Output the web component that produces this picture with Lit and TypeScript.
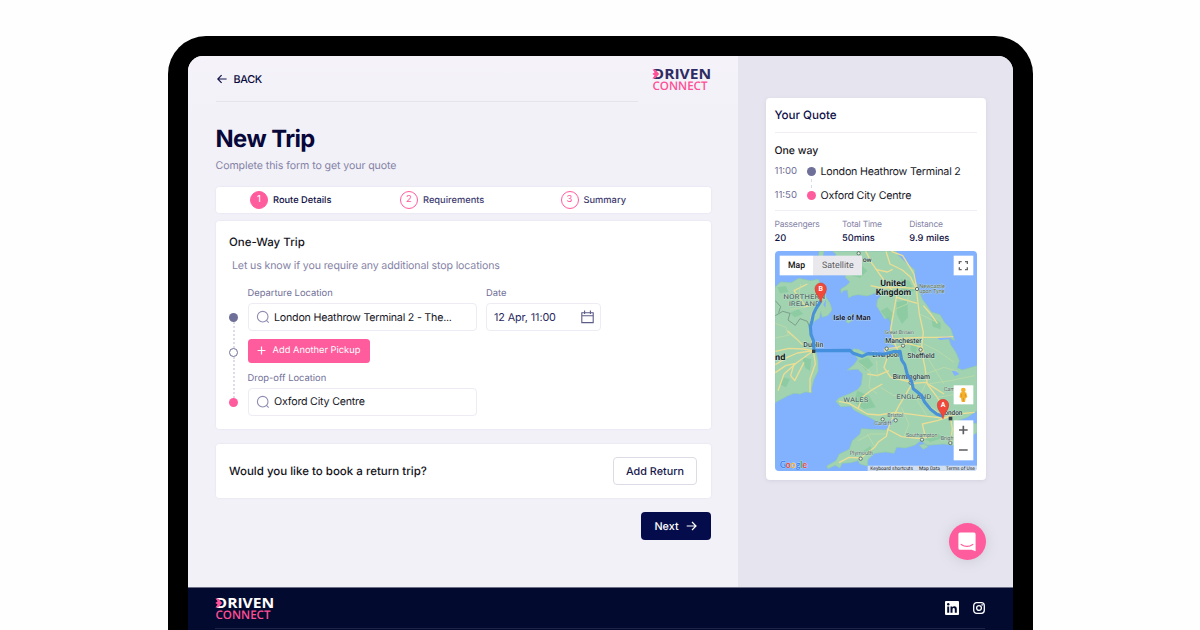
import { LitElement, css, html, svg } from 'lit';
import { customElement, property } from 'lit/decorators.js';

@customElement('brand-logo')
export class BrandLogo extends LitElement {
    @property() tone = 'dark';

    render() {
        return html`
            <svg class="logo ${this.tone}" width="60" height="24" viewBox="0 0 60 24">
                <text class="driven" x="0.6" y="11.6" textLength="58.6" lengthAdjust="spacingAndGlyphs">DRIVEN</text>
                <path class="notch" d="M-1 3.3H3.6L8 6.9L3.6 10.3H-1Z"/>
                <path class="arrow" d="M.4 2.5H3.2L7.2 6.9L3.2 11.5H.4L2.6 8.5L.4 6.9L2.6 5.3Z"/>
                <text class="connect" x="0.5" y="22.6" textLength="55" lengthAdjust="spacingAndGlyphs">CONNECT</text>
            </svg>
        `;
    }

    static styles = css`
        :host {
            display: block;
        }
        .logo {
            display: block;
            overflow: visible;
            font-family: "Open Sans", sans-serif;
        }
        .driven {
            font-size: 14px;
            font-weight: 700;
            fill: #2f2c64;
        }
        .light .driven {
            fill: #fff;
        }
        .notch {
            fill: #f5f3f9;
        }
        .light .notch {
            fill: #030a2f;
        }
        .arrow {
            fill: #ff4f96;
        }
        .connect {
            font-size: 11.8px;
            font-weight: 600;
            fill: #ff4f96;
        }
    `;
}

@customElement('route-map')
export class RouteMap extends LitElement {
    // [text, x, y, width, size, kind]
    labels: [string, number, number, number, number, string][] = [
        ['ow', 276, 43, 27, 20, 'town'],
        ['United', 329, 116, 77, 26, 'big'],
        ['Kingdom', 315, 142, 106, 26, 'big'],
        ['Newcastle', 446, 121, 77, 17, 'small'],
        ['upon Tyne', 446, 137, 76, 17, 'small'],
        ['NORTHERN', 38, 155, 126, 20, 'area'],
        ['IRELAND', 54, 176, 94, 20, 'area'],
        ['Isle of Man', 188, 218, 112, 22, 'strong'],
        ['Great Britain', 342, 260, 88, 16, 'small'],
        ['Manchester', 344, 287, 109, 21, 'town'],
        ['Dublin', 98, 300, 60, 21, 'town'],
        ['Liverpool', 305, 329, 80, 21, 'town'],
        ['Sheffield', 410, 332, 82, 21, 'town'],
        ['nd', 13, 339, 31, 26, 'big'],
        ['Birmingham', 366, 396, 112, 21, 'town'],
        ['ENGLAND', 377, 455, 105, 20, 'area'],
        ['WALES', 218, 465, 75, 20, 'area'],
        ['Cam', 519, 430, 34, 17, 'small'],
        ['Bristol', 350, 509, 48, 17, 'small'],
        ['Cardiff', 311, 534, 51, 17, 'small'],
        ['London', 511, 502, 64, 21, 'town'],
        ['Southampton', 406, 569, 94, 17, 'small'],
        ['Brighton', 510, 577, 62, 17, 'small'],
        ['Plymouth', 237, 624, 69, 18, 'small'],
    ];

    towns = [[264, 18], [439, 125], [348, 304], [397, 295], [450, 307], [420, 406], [336, 516], [375, 519], [454, 577], [539, 587], [270, 634]];

    roads = [
        'M285 12L304 48L330 85L350 112L378 145L368 200L360 245L370 285L392 330L405 375L425 408L400 450L385 475L362 520L352 545L347 567L322 585L312 600L270 632L235 630L205 646',
        'M346 12L358 50L395 68L420 90L437 125L446 200L458 255L452 307L463 360L470 410L500 450L535 505',
        'M362 12L396 25L430 80L438 122',
        'M315 66L350 74L366 66M300 115L332 122L380 120L436 123M378 150L440 168',
        'M370 275L410 272L458 270L500 270L548 268M348 304L380 300L410 288L455 300L460 330',
        'M458 175L480 200L500 228M340 304L352 325L340 360L360 390L420 404M425 408L465 405L520 440',
        'M425 410L440 435L480 480L520 510M205 462L235 468L262 484L290 500L325 503L375 495L430 502L470 507L520 512L560 500L612 495',
        'M535 508L500 520L455 530L462 560L455 575M540 512L545 545L540 585M350 545L392 568L450 574L500 565',
        'M290 380L320 385L355 370M262 484L275 450L300 430L335 410',
        'M14 312L55 303L98 305L128 310L80 345L40 380L22 430M128 310L134 350L118 395L118 435M128 310L80 317L50 330L14 352',
        'M128 308L118 250L123 200L150 165L105 178L70 130L110 110M14 376L45 355L75 348M70 350L60 385L72 400L100 345',
        'M96 292L72 270L50 250',
    ];

    pin(x: number, y: number, letter: string) {
        return svg`
            <path class="pin" d="M${x} ${y}C${x - 3} ${y - 19} ${x - 17} ${y - 24} ${x - 17} ${y - 41}A17 17 0 0 1 ${x + 17} ${y - 41}C${x + 17} ${y - 24} ${x + 3} ${y - 19} ${x} ${y}Z"/>
            <text class="pin-text" x=${x} y=${y - 34}>${letter}</text>
        `;
    }

    render() {
        return html`
            <svg class="map" width="202" height="220" viewBox="13 11 606 660">
                <rect class="sea" x="13" y="11" width="606" height="660"/>

                <path class="land" d="M13 120L30 104L62 106L84 93L120 100L142 96L158 120L166 150L178 168L184 188L172 204L155 210L150 192L146 212L128 224L118 240L124 262L132 284L135 310L142 340L142 372L130 396L122 425L124 436L104 434L88 440L70 438L50 446L32 456L13 466Z"/>
                <path class="land" d="M145 12L160 12L156 28L144 34ZM186 12L196 20L192 42L178 50L176 70L190 82L198 50L216 30L230 60L224 90L238 104L226 116L210 125L212 138L218 130L230 128L234 152L246 145L262 142L290 146L316 136L332 144L320 158L318 176L330 195L342 215L355 208L362 225L358 246L370 268L362 290L346 300L352 314L326 322L306 315L288 320L262 305L244 310L262 335L250 352L230 368L262 366L276 380L272 412L262 426L240 438L205 452L196 462L210 478L240 476L250 488L272 500L292 508L318 522L342 524L372 512L362 532L345 548L300 546L272 544L268 560L245 580L236 606L206 620L196 640L168 656L172 664L194 654L208 662L214 648L240 646L262 640L268 650L290 656L292 636L312 618L345 614L370 618L378 600L404 602L432 594L450 580L470 594L520 590L548 594L576 586L600 566L619 556L619 528L588 528L560 520L590 510L619 490L619 355L575 368L560 362L566 340L556 316L540 292L532 268L552 280L540 244L522 226L508 202L482 194L466 170L456 158L444 128L430 88L432 68L404 44L382 24L376 12Z"/>
                <path class="land" d="M238 206L250 198L244 220L232 228L226 222ZM240 312L252 304L264 312L252 322ZM446 594L462 590L472 598L458 606Z"/>
                <path class="water" d="M346 302L362 292L384 298L360 306ZM500 272L526 266L550 268L530 276L508 278ZM552 368L566 380L552 386L544 372ZM166 156L164 182L158 172Z"/>
                <path class="park" d="M238 60L262 45L290 70L268 92L240 84ZM330 190L350 180L366 198L360 224L344 210ZM390 95L415 100L432 130L404 140L390 122ZM378 164L410 158L412 210L394 230L378 200ZM262 340L292 330L308 352L286 370ZM260 430L295 445L315 480L280 486L250 464ZM420 280L440 290L436 320L420 310ZM482 210L510 226L510 246L486 238ZM278 610L300 596L306 612L286 626ZM20 120L45 116L54 134L28 138ZM58 196L84 186L98 200L72 210ZM94 330L122 335L118 370L104 362ZM460 575L500 560L520 570L480 584ZM34 388L58 396L46 420L30 412Z"/>

                <path class="border" d="M14 205L36 192L58 198L52 218L74 234L88 214L110 222L116 238M14 160L30 178L24 196"/>
                ${this.roads.map((d) => svg`<path class="road" d=${d}/>`)}
                <path class="street" d="M14 272L60 262L96 292M14 228L46 240L52 262M90 110L84 150L104 180L58 186M270 350L300 375L295 420L320 440M318 340L320 390M262 580L300 560L345 560M290 560L312 598M416 120L410 170L375 185M446 200L500 225M460 290L500 310L550 345M465 380L520 360L560 372M470 410L540 400L612 385M500 450L560 440M392 480L415 530L400 568M470 507L440 460L465 410M330 420L370 445L395 440M470 330L520 410"/>

                ${this.towns.map(([x, y]) => svg`<circle class="town-dot" cx=${x} cy=${y} r="5"/>`)}
                ${this.labels.map(([text, x, y, width, size, kind]) => svg`
                    <text class="label ${kind}" x=${x} y=${y} font-size=${size} textLength=${width} lengthAdjust="spacingAndGlyphs">${text}</text>
                `)}
                <rect class="capital" x="534" y="508" width="11" height="11"/>

                <path class="route" d="M150 162L136 184L128 200L124 220L119 238L121 262L128 280L130 310L170 310L238 309L248 318L274 327L292 319L340 320L368 313L388 312L393 338L402 352L410 382L422 400L428 424L452 444L462 464L480 486L498 500L514 506"/>
                <rect class="capital" x="124" y="307" width="10" height="10"/>
                ${this.pin(150, 165, 'B')}
                ${this.pin(517, 514, 'A')}

                <rect class="ctl" x="27" y="25" width="100" height="59"/>
                <rect class="ctl muted" x="127" y="25" width="147" height="59"/>
                <text class="ctl-text on" x="52" y="63" textLength="51" lengthAdjust="spacingAndGlyphs">Map</text>
                <text class="ctl-text" x="154" y="63" textLength="95" lengthAdjust="spacingAndGlyphs">Satellite</text>

                <rect class="ctl" x="549" y="25" width="59" height="59"/>
                <path class="full" d="M566 50V43H573M583 43H590V50M590 60V67H583M573 67H566V60"/>

                <rect class="ctl" x="549" y="414" width="59" height="57"/>
                <path class="man" d="M569 436Q578 431 587 436L590 450L585 452L583 464H573L571 452L566 450Z"/>
                <circle class="man" cx="578" cy="428" r="7"/>
                <path class="man-line" d="M572 440V449M584 440V449M578 452V462"/>

                <rect class="ctl" x="549" y="519" width="59" height="120"/>
                <path class="zoom" d="M565 548H591M578 535V561M565 608H591"/>

                <text class="google" x="27" y="662" textLength="82" lengthAdjust="spacingAndGlyphs"><tspan fill="#4285f4">G</tspan><tspan fill="#e8504a">o</tspan><tspan fill="#f3b92e">o</tspan><tspan fill="#4285f4">g</tspan><tspan fill="#45a65c">l</tspan><tspan fill="#e8504a">e</tspan></text>
                <rect class="legal-bg" x="291" y="655" width="328" height="16"/>
                <text class="legal" x="299" y="668" textLength="128" lengthAdjust="spacingAndGlyphs">Keyboard shortcuts</text>
                <text class="legal" x="445" y="668" textLength="63" lengthAdjust="spacingAndGlyphs">Map Data</text>
                <text class="legal" x="525" y="668" textLength="88" lengthAdjust="spacingAndGlyphs">Terms of Use</text>
            </svg>
        `;
    }

    static styles = css`
        :host {
            display: block;
        }
        .map {
            display: block;
            border-radius: 4px;
            font-family: Roboto, sans-serif;
            text-rendering: geometricPrecision;
        }
        .sea, .water {
            fill: #82b1fd;
        }
        .land {
            fill: #a1d3b1;
            stroke: #92cba9;
            stroke-width: 2;
        }
        .park {
            fill: #82c79b;
            opacity: .65;
        }
        .border {
            fill: none;
            stroke: #75947f;
            stroke-width: 2.5;
        }
        .road {
            fill: none;
            stroke: #ecdd94;
            stroke-width: 4;
            stroke-linejoin: round;
        }
        .street {
            fill: none;
            stroke: #c2dba6;
            stroke-width: 2.2;
        }
        .route {
            fill: none;
            stroke: #3f8ddb;
            stroke-width: 9.5;
            stroke-linejoin: round;
            stroke-linecap: round;
            opacity: .92;
        }
        .town-dot {
            fill: #dfeee2;
            stroke: #52605a;
            stroke-width: 2.5;
        }
        .capital {
            fill: #34434a;
        }
        .label {
            fill: #2b3b3f;
            stroke: #d5eadb;
            stroke-width: 2.5;
            paint-order: stroke;
            font-weight: 500;
        }
        .big {
            fill: #12191c;
            font-weight: 700;
        }
        .strong {
            fill: #15233f;
            stroke: #b6d1ef;
            font-weight: 700;
        }
        .area {
            fill: #56736a;
            stroke-width: 2;
        }
        .small {
            fill: #51635f;
            stroke-width: 1.5;
            font-weight: 400;
        }
        .pin {
            fill: #f0493b;
            stroke: #d23f33;
            stroke-width: 2;
        }
        .pin-text {
            fill: #fff;
            font-size: 21px;
            font-weight: 700;
            text-anchor: middle;
        }
        .ctl {
            fill: #fff;
        }
        .muted {
            fill: #e9e9ed;
        }
        .ctl-text {
            font-size: 27px;
            fill: #5b5b60;
        }
        .on {
            font-weight: 500;
            fill: #111;
        }
        .full {
            fill: none;
            stroke: #666;
            stroke-width: 4;
        }
        .man {
            fill: #f5b12c;
        }
        .man-line {
            fill: none;
            stroke: #d08a1e;
            stroke-width: 2;
        }
        .zoom {
            fill: none;
            stroke: #5e5e62;
            stroke-width: 5;
        }
        .google {
            font-family: Lato, sans-serif;
            font-size: 30px;
            font-weight: 700;
            stroke: #d6e4fb;
            stroke-width: 1.5;
            paint-order: stroke;
        }
        .legal-bg {
            fill: #dfe7ee;
            opacity: .85;
        }
        .legal {
            font-size: 15px;
            fill: #1e2226;
        }
    `;
}

@customElement('app-root')
export class AppRoot extends LitElement {
    steps = ['Route Details', 'Requirements', 'Summary'];

    stats = [
        ['Passengers', '20'],
        ['Total Time', '50mins'],
        ['Distance', '9.9 miles'],
    ];

    searchIcon() {
        return html`
            <svg class="search-icon" width="14" height="14" viewBox="0 0 14 14">
                <circle cx="6.7" cy="6.7" r="5.3"/>
                <path d="M10.4 10.4L12.7 12.7"/>
            </svg>
        `;
    }

    render() {
        return html`
            <div class="device">
                <div class="screen">
                    <div class="content">
                        <div class="main">
                            <div class="header">
                                <a class="back">
                                    <svg width="10" height="10" viewBox="0 0 10 10"><path class="back-arrow" d="M9.6 5H.9M4.6 1.1L.8 5L4.6 8.9"/></svg>
                                    BACK
                                </a>
                                <brand-logo></brand-logo>
                            </div>
                            <div class="header-line"></div>

                            <h1 class="title">New Trip</h1>
                            <p class="subtitle">Complete this form to get your quote</p>

                            <div class="panel steps">
                                ${this.steps.map((step, i) => html`
                                    <div class="step ${i === 0 ? 'active' : ''}">
                                        <span class="step-number">${i + 1}</span>
                                        <span class="step-name">${step}</span>
                                    </div>
                                `)}
                            </div>

                            <div class="panel trip">
                                <h2 class="trip-title">One-Way Trip</h2>
                                <p class="trip-note">Let us know if you require any additional stop locations</p>
                                <div class="route">
                                    <div class="rail">
                                        <span class="dot"></span>
                                        <span class="dots short"></span>
                                        <span class="dot hollow"></span>
                                        <span class="dots"></span>
                                        <span class="dot pink"></span>
                                    </div>
                                    <div class="fields">
                                        <div class="field-row">
                                            <div class="field">
                                                <label class="label">Departure Location</label>
                                                <div class="input">${this.searchIcon()}<span class="place">London Heathrow Terminal 2 - The...</span></div>
                                            </div>
                                            <div class="field">
                                                <label class="label">Date</label>
                                                <div class="input date">
                                                    <span class="date-text">12 Apr, 11:00</span>
                                                    <svg class="calendar" width="13" height="14" viewBox="0 0 13 14"><path d="M.8 2.7H12.2V12.6H.8ZM.8 5.8H12.2M3.6.6V4M9.4.6V4"/></svg>
                                                </div>
                                            </div>
                                        </div>
                                        <button class="add">
                                            <svg width="9" height="9" viewBox="0 0 9 9"><path class="plus" d="M4.5 .6V8.4M.6 4.5H8.4"/></svg>
                                            Add Another Pickup
                                        </button>
                                        <div class="field">
                                            <label class="label">Drop-off Location</label>
                                            <div class="input">${this.searchIcon()}<span class="place">Oxford City Centre</span></div>
                                        </div>
                                    </div>
                                </div>
                            </div>

                            <div class="panel return">
                                <span class="question">Would you like to book a return trip?</span>
                                <button class="add-return">Add Return</button>
                            </div>

                            <button class="next">
                                Next
                                <svg width="11" height="10" viewBox="0 0 11 10"><path class="next-arrow" d="M.7 5H10M6 1L10 5L6 9"/></svg>
                            </button>
                        </div>

                        <div class="side">
                            <div class="quote">
                                <h3 class="quote-title">Your Quote</h3>
                                <h4 class="way">One way</h4>
                                <div class="stop">
                                    <span class="time">11:00</span>
                                    <span class="stop-dot"></span>
                                    <span class="stop-name">London Heathrow Terminal 2</span>
                                </div>
                                <div class="link"></div>
                                <div class="stop">
                                    <span class="time">11:50</span>
                                    <span class="stop-dot pink"></span>
                                    <span class="stop-name">Oxford City Centre</span>
                                </div>
                                <div class="stats">
                                    ${this.stats.map(([name, value]) => html`
                                        <div class="stat">
                                            <div class="stat-name">${name}</div>
                                            <div class="stat-value">${value}</div>
                                        </div>
                                    `)}
                                </div>
                                <route-map></route-map>
                            </div>
                            <div class="chat">
                                <svg width="18" height="20" viewBox="0 0 18 20">
                                    <path class="bubble" d="M2 .6H16Q17.6 .6 17.6 2.2V19.3L13.6 17.8H2Q.4 17.8 .4 16.2V2.2Q.4 .6 2 .6Z"/>
                                    <path class="smile" d="M3.2 12.4Q9 16.4 14.8 12.4"/>
                                </svg>
                            </div>
                        </div>
                    </div>

                    <div class="footer">
                        <div class="footer-row">
                            <brand-logo tone="light"></brand-logo>
                            <div class="social">
                                <svg width="14" height="14" viewBox="0 0 14 14">
                                    <rect class="in-box" width="14" height="14" rx="1"/>
                                    <path class="in-mark" d="M2.2 5.4H4.2V11.8H2.2ZM5.5 5.4H7.4V6.3Q8.1 5.2 9.4 5.2Q11.8 5.2 11.8 8V11.8H9.8V8.4Q9.8 7 8.7 7Q7.5 7 7.5 8.4V11.8H5.5Z"/>
                                    <circle class="in-mark" cx="3.2" cy="3.3" r="1.2"/>
                                </svg>
                                <svg width="12" height="12" viewBox="0 0 12 12">
                                    <rect class="insta" x=".7" y=".7" width="10.6" height="10.6" rx="3"/>
                                    <circle class="insta" cx="6" cy="6" r="2.4"/>
                                    <circle class="insta-dot" cx="9.1" cy="2.9" r=".8"/>
                                </svg>
                            </div>
                        </div>
                    </div>
                </div>
            </div>
        `;
    }

    static styles = css`
        :host {
            display: flex;
            justify-content: center;
            box-sizing: border-box;
            height: 630px;
            padding: 36px 167px 0 168px;
            overflow: hidden;
            background: #fefefe;
            font-family: Inter, sans-serif;
            text-rendering: geometricPrecision;
            color: #0a0a3c;
        }
        h1, h2, h3, h4, p {
            margin: 0;
        }
        svg {
            flex: none;
        }
        button {
            display: flex;
            align-items: center;
            justify-content: center;
            box-sizing: border-box;
            font-family: inherit;
            text-rendering: inherit;
            border: 0;
            padding: 0;
            white-space: nowrap;
        }
        .device {
            box-sizing: border-box;
            width: 865px;
            height: 640px;
            padding: 20px 20px 0;
            background: #000;
            border-radius: 38px 38px 0 0;
        }
        .screen {
            height: 100%;
            overflow: hidden;
            border-radius: 15px 15px 0 0;
            background: #f2f1f8;
        }
        .content {
            display: grid;
            grid-template-columns: 550px 275px;
            height: 531px;
        }
        .main {
            display: flex;
            flex-direction: column;
            padding: 0 27.5px 0 28px;
            background: linear-gradient(#f5f3f9 0, #f2f1f8 60px);
        }
        .header {
            display: flex;
            align-items: center;
            justify-content: space-between;
            height: 46px;
            margin-right: -1.9px;
        }
        .back {
            display: flex;
            align-items: center;
            gap: 6.5px;
            padding-left: 1px;
            font-size: 10.8px;
            font-weight: 500;
            letter-spacing: -.3px;
        }
        .back-arrow {
            fill: none;
            stroke: #14144a;
            stroke-width: 1.2;
        }
        .header-line {
            height: 1px;
            width: 422px;
            margin-top: -1px;
            background: #e6e3ec;
        }
        .title {
            margin-top: 22px;
            margin-left: -.5px;
            font-size: 23.8px;
            line-height: 30px;
            font-weight: 700;
            letter-spacing: -.55px;
            color: #07073a;
        }
        .subtitle {
            margin: 5px 0 0 -.5px;
            font-size: 10.6px;
            line-height: 14px;
            letter-spacing: -.09px;
            color: #8583a5;
        }
        .panel {
            box-sizing: border-box;
            background: #fff;
            border-radius: 3px;
            box-shadow: 0 0 2px #dedbe8;
        }
        .steps {
            display: flex;
            align-items: center;
            height: 26px;
            margin-top: 14px;
            padding-left: 34px;
        }
        .step {
            display: flex;
            flex: none;
            align-items: center;
            gap: 5px;
            width: 160.5px;
            font-size: 9.3px;
            font-weight: 500;
            color: #3e3b70;
        }
        .step:first-child {
            width: 150px;
        }
        .step.active {
            color: #0f0f46;
        }
        .step-number {
            box-sizing: border-box;
            width: 18px;
            height: 18px;
            border: 1.3px solid #ff5c9d;
            border-radius: 50%;
            font-size: 9.5px;
            line-height: 15.5px;
            font-weight: 400;
            text-align: center;
            color: #ff5c9d;
        }
        .active .step-number {
            background: #ff5c9d;
            color: #fff;
        }
        .trip {
            height: 208px;
            margin-top: 8px;
            padding: 14px 13px 0;
        }
        .trip-title {
            font-size: 11.5px;
            line-height: 15px;
            font-weight: 500;
            color: #14141c;
        }
        .trip-note {
            margin: 9px 0 0 3px;
            font-size: 10.6px;
            line-height: 14px;
            letter-spacing: -.13px;
            color: #8583a5;
        }
        .route {
            display: flex;
            gap: 9.5px;
            margin-top: 15px;
        }
        .rail {
            display: flex;
            flex-direction: column;
            align-items: center;
            width: 9px;
            padding-top: 24.5px;
        }
        .dot {
            box-sizing: border-box;
            width: 9px;
            height: 9px;
            border-radius: 50%;
            background: #6f7099;
        }
        .hollow {
            background: #fff;
            border: 1.4px solid #6f7099;
        }
        .dots {
            width: 0;
            height: 41px;
            border-left: 2px dotted #dfdbe8;
        }
        .short {
            height: 26px;
        }
        .pink {
            background: #ff5c9d;
        }
        .fields {
            display: flex;
            flex-direction: column;
        }
        .field-row {
            display: flex;
            gap: 9px;
        }
        .label {
            display: block;
            height: 12px;
            margin-bottom: 3px;
            font-size: 9.4px;
            line-height: 12px;
            color: #716f97;
        }
        .input {
            display: flex;
            align-items: center;
            box-sizing: border-box;
            width: 229.5px;
            height: 28px;
            padding: 0 7px;
            gap: 4.5px;
            border: 1px solid #eeebf4;
            border-radius: 4px;
            background: #fff;
        }
        .place {
            font-size: 10.7px;
            letter-spacing: -.22px;
            white-space: nowrap;
            color: #17171f;
        }
        .search-icon {
            fill: none;
            stroke: #8f8db0;
            stroke-width: 1.1;
        }
        .date {
            width: 115px;
            padding: 0 6.5px 0 7px;
            justify-content: space-between;
        }
        .date-text {
            font-size: 10.8px;
            letter-spacing: -.1px;
            color: #29275e;
            white-space: nowrap;
        }
        .calendar {
            fill: none;
            stroke: #5d5b88;
            stroke-width: 1.1;
        }
        .add {
            gap: 6.5px;
            width: 122.5px;
            height: 23.5px;
            margin: 8px 0 10px;
            border-radius: 3.5px;
            background: #ff5c9d;
            color: #fff;
            font-size: 9.3px;
        }
        .plus, .next-arrow {
            fill: none;
            stroke: #fff;
            stroke-width: 1.2;
        }
        .return {
            display: flex;
            align-items: center;
            justify-content: space-between;
            height: 54px;
            margin-top: 15px;
            padding: 0 13.5px 0 13px;
        }
        .question {
            margin-bottom: 1px;
            font-size: 11.5px;
            font-weight: 500;
            color: #14141c;
        }
        .add-return {
            width: 84px;
            height: 28px;
            border: 1px solid #dddbe6;
            border-radius: 4px;
            background: #fff;
            font-size: 10.8px;
            font-weight: 500;
            color: #17174c;
        }
        .next {
            align-self: flex-end;
            gap: 7px;
            width: 70px;
            height: 28px;
            margin-top: 14px;
            border-radius: 4px;
            background: #050c4b;
            color: #fff;
            font-size: 10.8px;
            font-weight: 500;
        }
        .side {
            display: flex;
            flex-direction: column;
            padding: 42px 27.5px 0 28px;
            background: #e6e5ef;
        }
        .quote {
            box-sizing: border-box;
            height: 382px;
            padding: 8px 8.5px 0;
            border-radius: 4px;
            background: #fff;
            box-shadow: 0 1px 4px #d3d1df;
        }
        .quote-title {
            height: 26px;
            border-bottom: 1px solid #f0eef4;
            font-size: 11.6px;
            line-height: 18px;
            font-weight: 500;
            color: #10104a;
        }
        .way {
            margin: 10px 0 6px;
            font-size: 10.5px;
            line-height: 15px;
            font-weight: 500;
            color: #14141c;
        }
        .stop {
            display: flex;
            align-items: center;
            height: 15px;
            font-size: 10.7px;
            letter-spacing: -.22px;
            color: #17171f;
            white-space: nowrap;
        }
        .time {
            width: 32px;
            font-size: 9.6px;
            letter-spacing: 0;
            color: #716f97;
        }
        .stop-dot {
            width: 9px;
            height: 9px;
            margin-right: 5px;
            border-radius: 50%;
            background: #6f7099;
        }
        .stop-dot.pink {
            background: #ff5c9d;
        }
        .link {
            height: 9px;
            margin-left: 36.5px;
            border-left: 1px dashed #ddd9e6;
        }
        .stats {
            display: grid;
            grid-template-columns: repeat(3, 67.4px);
            margin-top: 7px;
            padding: 7.5px 0 5.5px;
            border-top: 1px solid #f0eef4;
            white-space: nowrap;
        }
        .stat-name {
            font-size: 8.5px;
            line-height: 12px;
            letter-spacing: -.2px;
            color: #8583a5;
        }
        .stat-value {
            margin-top: 1px;
            font-size: 9.3px;
            line-height: 14px;
            font-weight: 500;
            color: #11113f;
        }
        .chat {
            display: flex;
            align-items: center;
            justify-content: center;
            align-self: flex-end;
            width: 37px;
            height: 37px;
            margin-top: 43px;
            border-radius: 50%;
            background: #ff5c9d;
            box-shadow: 0 1px 14px #cbc9d4;
        }
        .bubble {
            fill: #fff;
        }
        .smile {
            fill: none;
            stroke: #ff5c9d;
            stroke-width: 1.2;
            stroke-linecap: round;
        }
        .footer {
            height: 60px;
            padding: 0 28px 0 27px;
            background: #030a2f;
            border-top: 1px solid #6d6f86;
        }
        .footer-row {
            display: flex;
            align-items: center;
            justify-content: space-between;
            height: 40px;
            border-bottom: 1px solid #1e2447;
        }
        .social {
            display: flex;
            align-items: center;
            gap: 14.5px;
        }
        .in-box, .insta-dot {
            fill: #fff;
        }
        .in-mark {
            fill: #030a2f;
        }
        .insta {
            fill: none;
            stroke: #fff;
            stroke-width: 1.3;
        }
    `;
}
